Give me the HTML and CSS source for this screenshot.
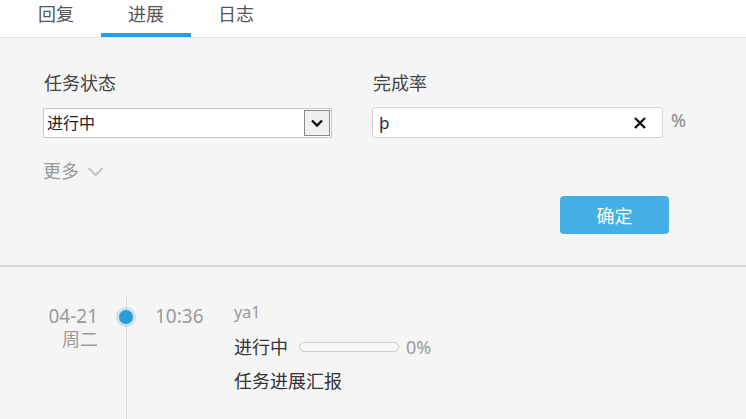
FILE: index.html
```html
<!DOCTYPE html>
<html lang="zh">
<head>
<meta charset="utf-8">
<link rel="stylesheet" href="styles.css">
</head>
<body>
<nav class="tabs">
  <div class="tab">回复</div>
  <div class="tab active">进展</div>
  <div class="tab">日志</div>
</nav>
<section class="filter">
  <div class="fields">
    <div class="field">
      <div class="label">任务状态</div>
      <div class="select">
        <span class="select-text">进行中</span>
        <span class="select-btn">
          <svg width="14" height="10" viewBox="0 0 14 10"><path d="M2 2.5 L7 7.5 L12 2.5" fill="none" stroke="#111" stroke-width="2.4"/></svg>
        </span>
      </div>
    </div>
    <div class="field">
      <div class="label">完成率</div>
      <div class="input-row">
        <div class="input">
          <span class="input-text">þ</span>
          <svg class="clear" width="14" height="14" viewBox="0 0 14 14"><path d="M2 2 L12 12 M12 2 L2 12" stroke="#111" stroke-width="2.4"/></svg>
        </div>
        <span class="pct">%</span>
      </div>
    </div>
  </div>
  <div class="more">更多
    <svg width="17" height="11" viewBox="0 0 17 11"><path d="M1.5 2 L8.5 9 L15.5 2" fill="none" stroke="#c4c4c4" stroke-width="2"/></svg>
  </div>
  <div class="actions"><button class="ok">确定</button></div>
</section>
<section class="timeline">
  <div class="item">
    <div class="date">
      <div class="day">04-21</div>
      <div class="week">周二</div>
    </div>
    <div class="axis"><span class="dot"></span></div>
    <div class="time">10:36</div>
    <div class="content">
      <div class="user">ya1</div>
      <div class="status">进行中<span class="bar"></span><span class="pct0">0%</span></div>
      <div class="desc">任务进展汇报</div>
    </div>
  </div>
</section>
</body>
</html>
```
FILE: styles.css
```css
* { box-sizing: border-box; }
html, body { margin: 0; padding: 0; }
body {
  width: 746px;
  height: 419px;
  overflow: hidden;
  background: #f5f5f5;
  font-family: "Noto Sans", "Noto Sans CJK SC", sans-serif;
  color: #333;
}
.tabs {
  display: flex;
  height: 38px;
  background: #fff;
  border-bottom: 1px solid #e0e0e0;
  padding-left: 11px;
}
.tab {
  width: 90px;
  height: 37px;
  text-align: center;
  font-size: 18px;
  line-height: 28px;
  color: #555;
  border-bottom: 4px solid transparent;
}
.tab.active { border-bottom-color: #1da1ee; }
.filter {
  padding: 33px 0 0 43px;
  height: 229px;
  border-bottom: 2px solid #d8d8d8;
}
.fields {
  display: grid;
  grid-template-columns: 289px 330px;
  column-gap: 40px;
}
.label {
  font-size: 18px;
  line-height: 24px;
  color: #444;
  height: 37px;
  padding-left: 1px;
}
.select {
  display: flex;
  height: 30px;
  background: #fff;
  border: 1px solid #c8c8c8;
}
.select-text {
  flex: 1;
  font-size: 16px;
  line-height: 28px;
  padding-left: 3px;
  color: #222;
}
.select-btn {
  width: 26px;
  height: 26px;
  margin: 1px;
  border: 1px solid #888;
  background: #f0f0f0;
  display: flex;
  align-items: center;
  justify-content: center;
}
.input-row {
  display: flex;
  align-items: center;
  margin-top: -1px;
}
.input {
  width: 291px;
  height: 31px;
  background: #fff;
  border: 1px solid #d4d4d4;
  border-radius: 3px;
  display: flex;
  align-items: center;
  padding: 0 15px 0 6px;
}
.input-text {
  flex: 1;
  font-size: 17px;
  color: #1a2a40;
}
.pct {
  margin-left: 8px;
  font-size: 18px;
  color: #888;
  margin-top: -6px;
}
.more {
  margin-top: 21px;
  font-size: 18px;
  line-height: 24px;
  color: #999;
  display: flex;
  align-items: center;
  gap: 8px;
}
.actions {
  width: 626px;
  display: flex;
  justify-content: flex-end;
  margin-top: 13px;
}
.ok {
  width: 109px;
  height: 38px;
  border: none;
  border-radius: 4px;
  background: #45b0e5;
  color: #fff;
  font-family: inherit;
  font-size: 18px;
}
.timeline {
  padding-top: 29px;
}
.item {
  display: grid;
  grid-template-columns: 98px 57px 79px 1fr;
  min-height: 130px;
}
.date {
  text-align: right;
  padding-top: 9px;
  color: #999;
  font-size: 19px;
  line-height: 23px;
}
.week { font-size: 18px; }
.axis {
  position: relative;
}
.axis::before {
  content: "";
  position: absolute;
  left: 28px;
  top: 0;
  bottom: 0;
  width: 1px;
  background: #dcdcdc;
}
.dot {
  position: absolute;
  left: 21px;
  top: 14px;
  width: 14px;
  height: 14px;
  border-radius: 50%;
  background: #2a9dd8;
  box-shadow: 0 0 0 3px rgba(42, 157, 216, 0.2);
}
.time {
  padding-top: 9px;
  color: #999;
  font-size: 19px;
  line-height: 23px;
}
.content {
  padding-top: 6px;
}
.user {
  font-size: 16px;
  line-height: 20px;
  color: #999;
}
.status {
  margin-top: 13px;
  font-size: 18px;
  line-height: 24px;
  color: #333;
  display: flex;
  align-items: center;
}
.bar {
  display: inline-block;
  width: 100px;
  height: 10px;
  margin-left: 11px;
  border: 1px solid #ccc;
  border-radius: 5px;
  background: #f7f7f7;
}
.pct0 {
  margin-left: 7px;
  color: #999;
}
.desc {
  margin-top: 10px;
  font-size: 18px;
  line-height: 24px;
  color: #333;
}
```
